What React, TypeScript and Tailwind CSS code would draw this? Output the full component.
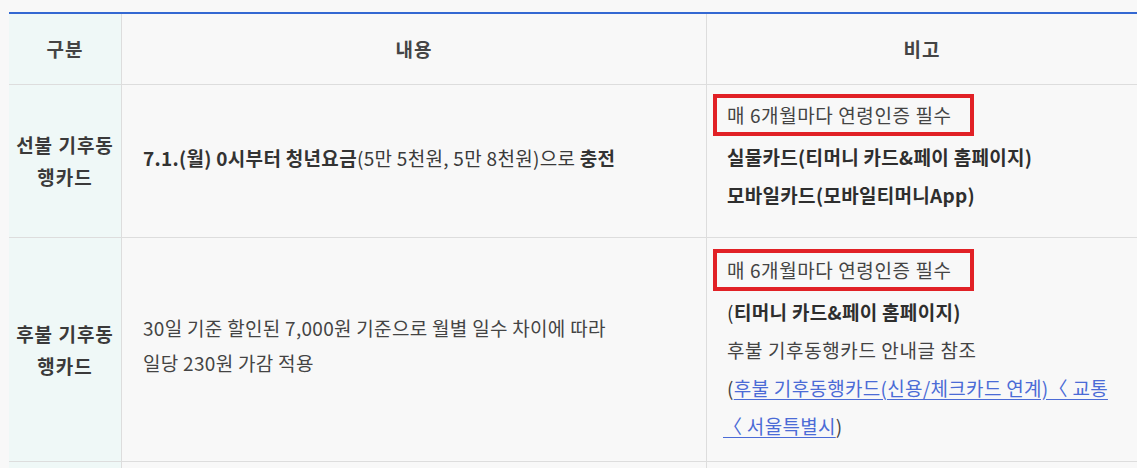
import React from 'react';

const font = { fontFamily: '"Noto Sans CJK KR", "Noto Sans", sans-serif' };

const Box = ({ children }: { children: React.ReactNode }) => (
  <div className="-ml-[14px] mb-[2px] flex h-[42px] w-[261px] items-center border-4 border-[#e12126] pl-[10px] leading-[34px] text-[#444]">
    {children}
  </div>
);

const Label = ({ lines }: { lines: string[] }) => (
  <div className="flex items-center justify-center border-r border-b border-[#dddddd] bg-[#eff8f7] text-center text-[19px] font-bold leading-[32px] tracking-[1px] text-[#3a3a3a]">
    <div>
      {lines.map((l) => (
        <div key={l}>{l}</div>
      ))}
    </div>
  </div>
);

export default function App() {
  return (
    <div className="h-[468px] w-[1137px] overflow-hidden bg-[#f8f8f8] pt-[12px] pl-[9px]" style={font}>
      <div className="border-t-2 border-[#3468d2]">
        <div className="grid grid-cols-[113px_585px_1fr] text-[19px] text-[#444]">
          {/* header */}
          <div className="flex h-[71px] items-center justify-center border-r border-b border-[#dddddd] bg-[#eff8f7] font-bold tracking-[1px] text-[#444]">
            구분
          </div>
          <div className="flex h-[71px] items-center justify-center border-r border-b border-[#dddddd] font-bold tracking-[1px] text-[#444]">
            내용
          </div>
          <div className="flex h-[71px] items-center justify-center border-b border-[#dddddd] font-bold tracking-[1px] text-[#444]">
            비고
          </div>

          {/* 선불 */}
          <Label lines={['선불 기후동', '행카드']} />
          <div className="flex h-[153px] items-center border-r border-b border-[#dddddd] pb-[6px] pl-[21px] tracking-[0.3px] whitespace-nowrap text-[#333]">
            <span className="font-bold">7.1.(월) 0시부터 청년요금</span>
            <span className="text-[#3a3a3a]">(5만 5천원, 5만 8천원)으로&nbsp;</span>
            <span className="font-bold">충전</span>
          </div>
          <div className="h-[153px] border-b border-[#dddddd] pt-[9px] pl-[20px] tracking-[0.6px] whitespace-nowrap leading-[38px]">
            <Box>매 6개월마다 연령인증 필수</Box>
            <div className="font-bold tracking-[0.3px] text-[#2e2e2e]">실물카드(티머니 카드&amp;페이 홈페이지)</div>
            <div className="font-bold tracking-[0.3px] text-[#2e2e2e]">모바일카드(모바일티머니App)</div>
          </div>

          {/* 후불 */}
          <Label lines={['후불 기후동', '행카드']} />
          <div className="flex h-[224px] items-center border-r border-b border-[#dddddd] pb-[10px] pl-[21px] leading-[35px] tracking-[0.3px] whitespace-nowrap">
            <div>
              <div>30일 기준 할인된 7,000원 기준으로 월별 일수 차이에 따라</div>
              <div>일당 230원 가감 적용</div>
            </div>
          </div>
          <div className="h-[224px] border-b border-[#dddddd] pt-[11px] pl-[20px] tracking-[0.6px] whitespace-nowrap leading-[38px]">
            <Box>매 6개월마다 연령인증 필수</Box>
            <div className="text-[#2e2e2e]">
              (<span className="font-bold tracking-[0.3px]">티머니 카드&amp;페이 홈페이지)</span>
            </div>
            <div>후불 기후동행카드 안내글 참조</div>
            <div className="tracking-[0.3px]">
              (
              <a href="#" className="text-[#4b6bd6] underline underline-offset-[3px]">
                후불 기후동행카드(신용/체크카드 연계)〈 교통
                <br />
                <span className="-ml-[4px]">〈 서울특별시</span>
              </a>
              )
            </div>
          </div>

          {/* next row (cut off) */}
          <div className="h-[40px] border-r border-[#dddddd] bg-[#eff8f7]" />
          <div className="h-[40px] border-r border-[#dddddd]" />
          <div className="h-[40px]" />
        </div>
      </div>
    </div>
  );
}
